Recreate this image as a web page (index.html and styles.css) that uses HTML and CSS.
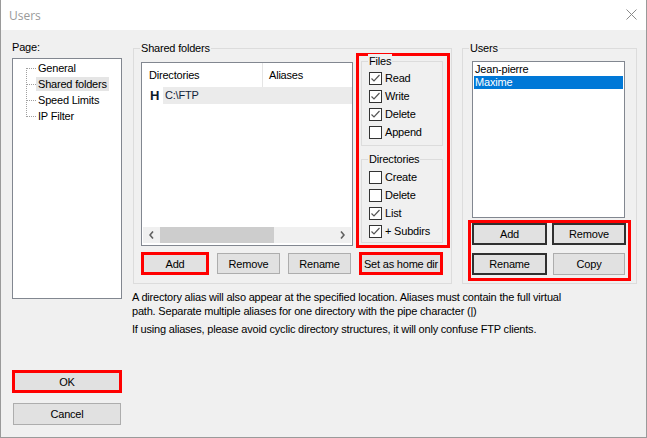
FILE: index.html
```html
<!DOCTYPE html>
<html>
<head>
<meta charset="utf-8">
<title>Users</title>
<link rel="stylesheet" href="styles.css">
</head>
<body>
<div class="window">
  <div class="titlebar">
    <span class="title">Users</span>
    <svg class="close" width="11" height="11" viewBox="0 0 11 11"><path d="M0.5 0.5L10.5 10.5M10.5 0.5L0.5 10.5" stroke="#8a8a8a" stroke-width="1" fill="none"/></svg>
  </div>
  <div class="body">
    <div class="leftcol">
      <div class="pagelabel">Page:</div>
      <div class="tree">
        <svg class="treelines" width="10" height="64" viewBox="0 0 10 64">
          <line x1="0.5" y1="8" x2="0.5" y2="57" stroke="#a0a0a0" stroke-dasharray="1 1"/>
          <line x1="1" y1="8.5" x2="10" y2="8.5" stroke="#a0a0a0" stroke-dasharray="1 1"/>
          <line x1="1" y1="24.5" x2="10" y2="24.5" stroke="#a0a0a0" stroke-dasharray="1 1"/>
          <line x1="1" y1="40.5" x2="10" y2="40.5" stroke="#a0a0a0" stroke-dasharray="1 1"/>
          <line x1="1" y1="56.5" x2="10" y2="56.5" stroke="#a0a0a0" stroke-dasharray="1 1"/>
        </svg>
        <ul class="treeitems">
          <li><span>General</span></li>
          <li><span class="sel">Shared folders</span></li>
          <li><span>Speed Limits</span></li>
          <li><span>IP Filter</span></li>
        </ul>
      </div>
      <div class="btn hl okbtn">OK</div>
      <div class="btn cancelbtn">Cancel</div>
    </div>

    <div class="main">
      <div class="groups">
        <div class="group shared">
          <div class="legend">Shared folders</div>
          <div class="shared-top">
            <div class="dirlist">
              <div class="dirhead">
                <div class="col1">Directories</div>
                <div class="col2">Aliases</div>
              </div>
              <div class="dirrow"><span class="hicon">H</span><span class="path">C:\FTP</span></div>
              <div class="fill"></div>
              <div class="hscroll">
                <div class="arrow"><svg width="5" height="8" viewBox="0 0 5 8"><path d="M4 0.5L1 4L4 7.5" stroke="#606060" stroke-width="1.6" fill="none"/></svg></div>
                <div class="thumb"></div>
                <div class="track"></div>
                <div class="arrow"><svg width="5" height="8" viewBox="0 0 5 8"><path d="M1 0.5L4 4L1 7.5" stroke="#606060" stroke-width="1.6" fill="none"/></svg></div>
              </div>
            </div>
            <div class="perms">
              <div class="group subgroup files">
                <div class="legend">Files</div>
                <div class="rows rows-files">
                  <div class="cb"><svg width="13" height="13" viewBox="0 0 13 13"><rect x="0.5" y="0.5" width="12" height="12" fill="#fff" stroke="#333"/><path d="M2.5 6.5L5 9L10.5 3" stroke="#555" stroke-width="1.2" fill="none"/></svg><span>Read</span></div>
                  <div class="cb"><svg width="13" height="13" viewBox="0 0 13 13"><rect x="0.5" y="0.5" width="12" height="12" fill="#fff" stroke="#333"/><path d="M2.5 6.5L5 9L10.5 3" stroke="#555" stroke-width="1.2" fill="none"/></svg><span>Write</span></div>
                  <div class="cb"><svg width="13" height="13" viewBox="0 0 13 13"><rect x="0.5" y="0.5" width="12" height="12" fill="#fff" stroke="#333"/><path d="M2.5 6.5L5 9L10.5 3" stroke="#555" stroke-width="1.2" fill="none"/></svg><span>Delete</span></div>
                  <div class="cb"><svg width="13" height="13" viewBox="0 0 13 13"><rect x="0.5" y="0.5" width="12" height="12" fill="#fff" stroke="#333"/></svg><span>Append</span></div>
                </div>
              </div>
              <div class="group subgroup dirs">
                <div class="legend">Directories</div>
                <div class="rows rows-dirs">
                  <div class="cb"><svg width="13" height="13" viewBox="0 0 13 13"><rect x="0.5" y="0.5" width="12" height="12" fill="#fff" stroke="#333"/></svg><span>Create</span></div>
                  <div class="cb"><svg width="13" height="13" viewBox="0 0 13 13"><rect x="0.5" y="0.5" width="12" height="12" fill="#fff" stroke="#333"/></svg><span>Delete</span></div>
                  <div class="cb"><svg width="13" height="13" viewBox="0 0 13 13"><rect x="0.5" y="0.5" width="12" height="12" fill="#fff" stroke="#333"/><path d="M2.5 6.5L5 9L10.5 3" stroke="#555" stroke-width="1.2" fill="none"/></svg><span>List</span></div>
                  <div class="cb"><svg width="13" height="13" viewBox="0 0 13 13"><rect x="0.5" y="0.5" width="12" height="12" fill="#fff" stroke="#333"/><path d="M2.5 6.5L5 9L10.5 3" stroke="#555" stroke-width="1.2" fill="none"/></svg><span>+ Subdirs</span></div>
                </div>
              </div>
            </div>
          </div>
          <div class="shared-buttons">
            <div class="btn hl b-add">Add</div>
            <div class="btn b-remove">Remove</div>
            <div class="btn b-rename">Rename</div>
            <div class="btn hl b-home">Set as home dir</div>
          </div>
        </div>

        <div class="group users">
          <div class="legend">Users</div>
          <div class="userlist">
            <div class="uitem">Jean-pierre</div>
            <div class="uitem sel">Maxime</div>
          </div>
          <div class="userbtns">
            <div class="btn dark">Add</div>
            <div class="btn dark">Remove</div>
            <div class="btn dark">Rename</div>
            <div class="btn copy">Copy</div>
          </div>
        </div>
      </div>

      <div class="desc">
        <p>A directory alias will also appear at the specified location. Aliases must contain the full virtual<br>path. Separate multiple aliases for one directory with the pipe character (|)</p>
        <p class="p2">If using aliases, please avoid cyclic directory structures, it will only confuse FTP clients.</p>
      </div>
    </div>
  </div>
</div>
</body>
</html>
```

FILE: styles.css
```css
* { box-sizing: border-box; margin: 0; padding: 0; }

html, body {
  width: 647px;
  height: 438px;
  overflow: hidden;
  background: #fff;
}

body {
  font-family: "Liberation Sans", Arial, sans-serif;
  font-size: 11px;
  letter-spacing: -0.2px;
  color: #000;
}

.window {
  width: 647px;
  height: 438px;
  border: 1px solid #9a9a9a;
  border-top: none;
  display: flex;
  flex-direction: column;
  background: #f0f0f0;
}

.titlebar {
  height: 30px;
  flex: none;
  background: #fff;
  display: flex;
  align-items: center;
  justify-content: space-between;
  padding: 0 9px 0 8px;
}

.title {
  font-family: "Open Sans", "Noto Sans", sans-serif;
  font-size: 12px;
  letter-spacing: 0;
  color: #9a9a9a;
}

.close { display: block; margin-top: -1px; }

.body {
  flex: 1;
  display: flex;
  padding-left: 11px;
}

/* Left column */
.leftcol {
  width: 110px;
  flex: none;
  display: flex;
  flex-direction: column;
}

.pagelabel {
  margin-top: 10px;
  height: 14px;
  line-height: 14px;
}

.tree {
  margin-top: 4px;
  height: 241px;
  background: #fff;
  border: 1px solid #828790;
  display: flex;
  align-items: flex-start;
  padding: 1px 0 0 13px;
}

.treelines { display: block; flex: none; }

.treeitems { list-style: none; }

.treeitems li {
  height: 16px;
  display: flex;
  align-items: center;
}

.treeitems span {
  padding: 0 2px;
  line-height: 14px;
}

.treeitems span.sel { background: #e5e5e5; }

.btn {
  background: #e1e1e1;
  border: 1px solid #adadad;
  display: flex;
  align-items: center;
  justify-content: center;
  white-space: nowrap;
}

.btn.hl { border: 3px solid #f00; }

.okbtn {
  margin-top: 71px;
  width: 110px;
  height: 23px;
}

.cancelbtn {
  margin-top: 10px;
  margin-left: 1px;
  width: 108px;
  height: 22px;
}

/* Main area */
.main {
  margin-left: 10px;
  display: flex;
  flex-direction: column;
}

.groups {
  margin-top: 18px;
  display: flex;
}

.group {
  border: 1px solid #dcdcdc;
  display: flex;
  flex-direction: column;
}

.legend {
  align-self: flex-start;
  height: 14px;
  line-height: 14px;
  margin: -8px 0 -6px 6px;
  padding: 0 1px;
  background: #f0f0f0;
}

.shared {
  margin-left: 1px;
  width: 319px;
  height: 236px;
}

.shared-top {
  margin: 4px 0 0 7px;
  display: flex;
  align-items: flex-start;
}

.dirlist {
  margin-top: 9px;
  width: 212px;
  height: 184px;
  background: #fff;
  border: 1px solid #828790;
  display: flex;
  flex-direction: column;
}

.dirhead {
  display: flex;
  height: 24px;
}

.col1 {
  width: 121px;
  padding-left: 7px;
  border-right: 1px solid #e5e5e5;
  display: flex;
  align-items: center;
}

.col2 {
  padding-left: 6px;
  display: flex;
  align-items: center;
}

.dirrow {
  display: flex;
  height: 17px;
  align-items: center;
}

.hicon {
  margin-left: 8px;
  width: 13px;
  font-weight: bold;
  font-size: 13px;
  letter-spacing: 0;
  color: #0c1a2a;
  line-height: 17px;
}

.path {
  flex: 1;
  height: 17px;
  line-height: 17px;
  padding-left: 2px;
  background: #ebebeb;
  color: #10233a;
}

.fill { flex: 1; }

.hscroll {
  height: 16px;
  margin: 0 1px 2px 1px;
  background: #f0f0f0;
  display: flex;
  align-items: stretch;
}

.hscroll .arrow {
  width: 17px;
  display: flex;
  align-items: center;
  justify-content: center;
}

.hscroll .arrow svg { display: block; }

.thumb {
  width: 114px;
  background: #cdcdcd;
}

.track { flex: 1; }

.perms {
  margin-left: 3px;
  width: 94px;
  height: 195px;
  border: 3px solid #f00;
  padding: 5px 4px 2px 2px;
  display: flex;
  flex-direction: column;
}

.subgroup { width: 82px; }

.files { height: 85px; }

.dirs {
  margin-top: 13px;
  height: 84px;
}

.rows { margin-left: 7px; }
.rows-files { margin-top: 7px; }
.rows-dirs { margin-top: 8px; }

.cb {
  height: 18px;
  display: flex;
  align-items: center;
  white-space: nowrap;
}

.cb svg { display: block; flex: none; }
.cb span { margin-left: 3px; }

.shared-buttons {
  margin: 4px 0 0 7px;
  display: flex;
  align-items: flex-start;
  gap: 8px;
}

.b-add { width: 68px; height: 23px; }
.b-remove, .b-rename { width: 63px; height: 21px; margin-top: 1px; }
.b-home { width: 84px; height: 23px; }

/* Users group */
.users {
  margin-left: 10px;
  width: 175px;
  height: 236px;
}

.userlist {
  margin: 12px 0 0 9px;
  width: 153px;
  height: 157px;
  background: #fff;
  border: 1px solid #828790;
  padding: 1px;
}

.uitem {
  height: 13px;
  line-height: 13px;
  padding-left: 1px;
}

.uitem.sel {
  background: #0078d7;
  color: #fff;
}

.userbtns {
  margin: 2px 0 0 5px;
  width: 163px;
  height: 61px;
  border: 3px solid #f00;
  padding: 0 0 0 1px;
  display: grid;
  grid-template-columns: 75px 74px;
  grid-template-rows: 22px 22px;
  column-gap: 5px;
  row-gap: 8px;
}

.btn.dark { border: 2px solid #303030; }

.btn.copy {
  width: 72px;
  margin-left: 1px;
  border: 1px solid #adadad;
}

/* Description */
.desc {
  margin-top: 6px;
  line-height: 14px;
  white-space: nowrap;
}

.desc .p2 { margin-top: 4px; }
```
